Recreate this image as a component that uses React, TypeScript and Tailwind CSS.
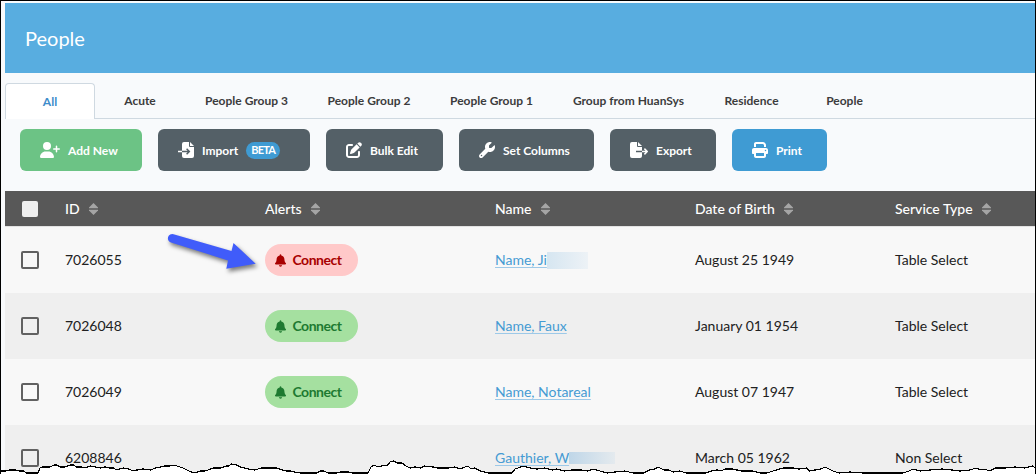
import React from "react";
import { FaBell, FaPenToSquare, FaPrint, FaUserPlus, FaWrench } from "react-icons/fa6";

interface Action {
  label: string;
  icon: React.ReactNode;
  className: string;
  badge?: string;
}

interface Person {
  id: string;
  alert?: "red" | "green";
  name: string;
  dob: string;
  service: string;
  mask?: string;
}

function FileImportIcon() {
  return (
    <svg className="size-4" viewBox="0 0 16 16" fill="none">
      <path d="M6 0H11V4A1 1 0 0 0 12 5H16V14A2 2 0 0 1 14 16H6A2 2 0 0 1 4 14V2A2 2 0 0 1 6 0Z" fill="currentColor" />
      <path d="M12 0 16 4H12Z" fill="currentColor" />
      <path d="M4 9.5H11M8.6 6.8 11.3 9.5 8.6 12.2" stroke="#546067" strokeWidth="1.5" />
      <path d="M0 9.5H4" stroke="currentColor" strokeWidth="1.5" />
    </svg>
  );
}

function FileExportIcon() {
  return (
    <svg className="h-4 w-[18px]" viewBox="0 0 18 16" fill="none">
      <path d="M2 0H7V4A1 1 0 0 0 8 5H12V14A2 2 0 0 1 10 16H2A2 2 0 0 1 0 14V2A2 2 0 0 1 2 0Z" fill="currentColor" />
      <path d="M8 0 12 4H8Z" fill="currentColor" />
      <path d="M6 9.5H12" stroke="#546067" strokeWidth="1.5" />
      <path d="M12 9.5H17M14.4 6.6 17.3 9.5 14.4 12.4" stroke="currentColor" strokeWidth="1.5" />
    </svg>
  );
}

const tabs = [
  { label: "Acute", className: "w-[90px]" },
  { label: "People Group 3", className: "w-[123px]" },
  { label: "People Group 2", className: "w-[122px]" },
  { label: "People Group 1", className: "w-[123px]" },
  { label: "Group from HuanSys", className: "w-[151px]" },
  { label: "Residence", className: "w-[95px]" },
  { label: "People", className: "w-[91px]" },
];

const actions: Action[] = [
  { label: "Add New", icon: <FaUserPlus className="h-4 w-5" />, className: "w-[122px] bg-[#6cc385]" },
  { label: "Import", icon: <FileImportIcon />, className: "w-[152px] bg-[#546067]", badge: "BETA" },
  { label: "Bulk Edit", icon: <FaPenToSquare className="size-4" />, className: "w-[117px] bg-[#546067]" },
  { label: "Set Columns", icon: <FaWrench className="size-4" />, className: "w-[135px] bg-[#546067]" },
  { label: "Export", icon: <FileExportIcon />, className: "w-[106px] bg-[#546067]" },
  { label: "Print", icon: <FaPrint className="size-4" />, className: "w-[95px] bg-[#3f9bd3]" },
];

const columns = ["ID", "Alerts", "Name", "Date of Birth", "Service Type"];

const people: Person[] = [
  { id: "7026055", alert: "red", name: "Name, Ji", dob: "August 25 1949", service: "Table Select", mask: "h-[17px] w-[41px] from-[#d6e6f1] to-[#edf2f6]" },
  { id: "7026048", alert: "green", name: "Name, Faux", dob: "January 01 1954", service: "Table Select" },
  { id: "7026049", alert: "green", name: "Name, Notareal", dob: "August 07 1947", service: "Table Select" },
  { id: "6208846", name: "Gauthier, W", dob: "March 05 1962", service: "Non Select", mask: "h-3 w-[46px] from-[#bfd6e8] to-[#e4eaee]" },
];

const rowGrid = "grid grid-cols-[60px_200px_230px_200px_200px_1fr] items-center";

const tornEdge =
  "0,471 5,471 10,470 16,470 19,471 24,471 26,473 38,473 40,468 42,467 50,467 54,465 57,465 60,467 65,467 70,465 74,465 76,467 82,467 85,468 90,466 96,467 100,468 105,467 110,468 114,468 116,470 120,469 123,468 129,469 133,471 137,470 143,469 151,470 155,468 161,467 164,466 170,466 173,465 177,466 180,467 183,468 187,470 191,472 195,473 200,471 205,471 208,470 213,468 221,468 226,466 229,466 231,464 237,465 240,467 244,468 248,469 255,470 261,468 270,468 277,468 282,470 287,471 290,471 294,472 301,473 317,473 320,471 324,471 328,473 337,473 341,472 348,472 352,473 368,473 371,467 374,465 378,467 381,466 388,465 390,462 394,461 397,463 402,463 406,466 410,468 415,467 421,468 424,466 433,467 438,468 448,468 455,467 460,469 465,467 468,466 471,469 475,468 480,471 488,473 512,473 515,469 518,468 523,466 530,468 537,469 545,468 552,470 557,469 564,471 572,470 581,470 588,471 593,469 600,471 607,473 615,472 625,471 633,473 644,473 649,470 655,469 658,467 664,470 669,470 673,472 680,471 686,473 706,473 711,471 717,470 721,471 725,469 732,469 742,471 753,471 760,473 767,473 773,471 783,468 793,468 799,469 807,468 809,471 815,470 821,469 825,467 829,469 833,471 839,473 850,472 863,473 903,473 909,471 913,469 920,471 930,470 942,469 952,470 960,471 970,470 976,468 981,470 984,469 990,471 995,468 1005,468 1015,467 1025,468 1029,467 1033,466 1036,469";

function SortIcon() {
  return (
    <svg width="9" height="12" viewBox="0 0 9 12" className="fill-[#a5a5a5]">
      <path d="M4.5 0 9 4.5V5.3H0V4.5Z" />
      <path d="M4.5 12 9 7.5V6.7H0V7.5Z" />
    </svg>
  );
}

function Header() {
  return (
    <header className="flex h-[70px] items-center bg-[#58ade0] px-5 text-xl text-white">
      <h1>People</h1>
    </header>
  );
}

function Tabs() {
  return (
    <nav className="mt-2.5 flex h-9 items-stretch text-xs font-bold text-[#3c3c3c]">
      <div className="flex w-[90px] items-center justify-center rounded-t border border-b-0 border-[#cfd9e1] bg-white text-[#3e8dcb]">
        All
      </div>
      <div className="flex flex-1 border-b border-[#cfd9e1]">
        {tabs.map((tab) => (
          <div key={tab.label} className={`flex items-center justify-center whitespace-nowrap pt-px ${tab.className}`}>
            {tab.label}
          </div>
        ))}
      </div>
    </nav>
  );
}

function Toolbar() {
  return (
    <div className="mt-2.5 flex gap-4 px-[15px]">
      {actions.map((action) => (
        <button
          key={action.label}
          className={`flex h-[42px] items-center gap-2 whitespace-nowrap rounded-md pl-5 text-xs font-bold text-white ${action.className}`}
        >
          {action.icon}
          <span className="pt-0.5">{action.label}</span>
          {action.badge && (
            <span className="flex h-[17px] w-[34px] items-center justify-center rounded-full bg-[#3f9bd3] pt-px text-[11px] tracking-[-0.8px]">
              {action.badge}
            </span>
          )}
        </button>
      ))}
    </div>
  );
}

function AlertPill({ color }: { color: Person["alert"] }) {
  const tone = color === "red" ? "bg-[#ffc9c9] text-[#a80000]" : "bg-[#a5e0a0] text-[#1e7a31]";
  return (
    <span className={`inline-flex h-8 w-[93px] items-center gap-[6.5px] rounded-full pl-2.5 font-bold tracking-[-0.5px] ${tone}`}>
      <FaBell className="h-[13px] w-[11px]" />
      Connect
    </span>
  );
}

function PeopleTable() {
  return (
    <section className="mt-5 text-sm text-[#212121]">
      <div className={`h-9 border-b border-[#e2e2e2] bg-[#585858] font-medium text-white ${rowGrid}`}>
        <span className="ml-[17px] size-4 rounded-xs bg-[#efefef]" />
        {columns.map((column) => (
          <span key={column} className="flex items-center gap-[9.5px]">
            {column}
            <SortIcon />
          </span>
        ))}
      </div>
      {people.map((person) => (
        <div key={person.id} className={`h-[66px] odd:bg-[#efefef] even:bg-[#f8f8f8] ${rowGrid}`}>
          <span className="ml-4 size-[18px] rounded-xs border-2 border-[#616161]" />
          <span>{person.id}</span>
          <span className="flex">
            {person.alert && <AlertPill color={person.alert} />}
          </span>
          <span className="flex items-center">
            <a className="text-[#459bd3] underline decoration-[#9dc9e8] underline-offset-2">{person.name}</a>
            {person.mask && <span className={`bg-linear-to-r ${person.mask}`} />}
          </span>
          <span>{person.dob}</span>
          <span>{person.service}</span>
        </div>
      ))}
    </section>
  );
}

export default function App() {
  return (
    <main className="relative h-[474px] w-[1036px] overflow-hidden border-x border-t border-black bg-[#f8fafc] pl-1 pt-0.5 font-['Lato',sans-serif]">
      <Header />
      <Tabs />
      <Toolbar />
      <PeopleTable />
      <svg
        className="absolute -left-px -top-px drop-shadow-[2px_3px_2px_rgba(0,0,0,0.5)]"
        width="270"
        height="290"
        viewBox="0 0 270 290"
      >
        <path d="M173.5 234.2 231.5 251 233.5 243 255.7 263.7 226.3 268.7 228 260.4 171 242.5A4.3 4.3 0 0 1 173.5 234.2Z" fill="#405cfa" />
      </svg>
      <svg className="absolute -left-px -top-px" width="1036" height="474" viewBox="0 0 1036 474">
        <polygon points={`${tornEdge} 1036,476 0,476`} fill="#fff" />
        <polyline points={tornEdge} fill="none" stroke="#000" strokeWidth="1.2" shapeRendering="crispEdges" />
      </svg>
    </main>
  );
}
